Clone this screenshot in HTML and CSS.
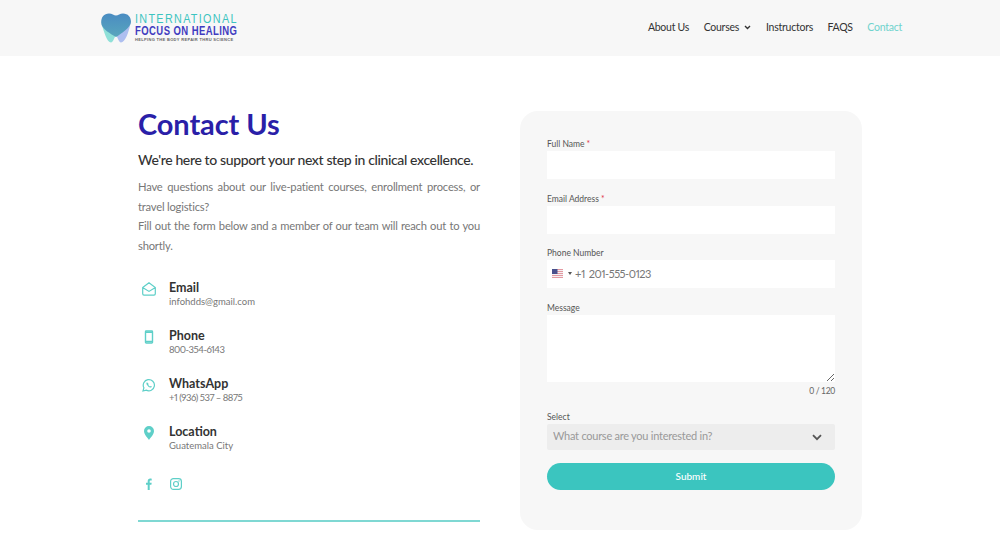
FILE: index.html
```html
<!DOCTYPE html>
<html lang="en">
<head>
    <meta charset="UTF-8">
    <meta name="viewport" content="width=device-width, initial-scale=1.0">
    <title>Contact Us</title>
    <link rel="stylesheet" href="styles.css">
</head>
<body>

<header class="site-header">
    <a class="logo" href="#">
        <svg class="logo-mark" width="30" height="30" viewBox="0 0 30 30">
            <defs>
                <linearGradient id="toothBlue" x1="0" y1="0" x2="0" y2="1">
                    <stop offset="0" stop-color="#4a8cc2"/>
                    <stop offset="1" stop-color="#58a6bd"/>
                </linearGradient>
            </defs>
            <path d="M.6 11C3 19 6 29.500 10 29.500c2 0 3-4.500 5-7.500l-3-8z" fill="#8fe0d8"/>
            <path d="M29.500 10C28 19 24 29.500 20 29.500c-2 0-3-4.500-5-7.500l3-8z" fill="#aebff0"/>
            <path d="M8 .5c3 0 5 2 7 2s4-2 7-2c5 0 8 3.500 8 8.500 0 5-10 12-15 15C10 21 .5 16 .2 10 0 4 3 .5 8 .5z" fill="url(#toothBlue)"/>
        </svg>
        <span class="logo-text">
            <span class="logo-top">INTERNATIONAL</span>
            <span class="logo-main">FOCUS ON HEALING</span>
            <span class="logo-tag">HELPING THE BODY REPAIR THRU SCIENCE</span>
        </span>
    </a>
    <nav class="main-nav">
        <a href="#">About Us</a>
        <a href="#" class="has-sub">Courses
            <svg width="7" height="5" viewBox="0 0 7 5"><path d="M1 1l2.5 2.5L6 1" fill="none" stroke="#333" stroke-width="1.4"/></svg>
        </a>
        <a href="#">Instructors</a>
        <a href="#">FAQS</a>
        <a href="#" class="current">Contact</a>
    </nav>
</header>

<main class="contact">
    <section class="contact-info">
        <h1>Contact Us</h1>
        <h2>We're here to support your next step in clinical excellence.</h2>
        <p class="intro">Have questions about our live-patient courses, enrollment process, or travel logistics?<br>Fill out the form below and a member of our team will reach out to you shortly.</p>

        <div class="info-item">
            <svg class="info-icon" width="14" height="14" viewBox="0 0 14 14"><path d="M.7 5.6L7 .8l6.3 4.8v6.2a1.3 1.3 0 0 1-1.3 1.3H2a1.3 1.3 0 0 1-1.3-1.3zM1 5.8l6 3.6 6-3.6" fill="none" stroke="#5ecfc8" stroke-width="1.2"/></svg>
            <div>
                <h3>Email</h3>
                <p>infohdds@gmail.com</p>
            </div>
        </div>
        <div class="info-item">
            <svg class="info-icon" width="14" height="14" viewBox="0 0 14 14"><path d="M4.200 1h5.600a.7.7 0 0 1 .7.7v10.600a.7.7 0 0 1-.7.7H4.200a.7.7 0 0 1-.7-.7V1.700a.7.7 0 0 1 .7-.7z" fill="none" stroke="#5ecfc8" stroke-width="1.400"/><path d="M3.500 2.200h7M3.500 11.500h7" stroke="#5ecfc8" stroke-width="1.400"/></svg>
            <div>
                <h3>Phone</h3>
                <p class="num">800-354-6143</p>
            </div>
        </div>
        <div class="info-item">
            <svg class="info-icon" width="14" height="14" viewBox="0 0 14 14"><path d="M1 13l.9-3.200A5.600 5.600 0 1 1 4.200 12.100z" fill="none" stroke="#5ecfc8" stroke-width="1.200"/><path d="M5 4.200c-.8.600-.8 1.700 0 2.900s2 2.300 3.200 2.500c.9.100 1.500-.4 1.700-1.100L8.700 7.900l-.7.600c-.7-.3-1.400-1-1.800-1.800l.5-.7z" fill="#5ecfc8"/></svg>
            <div>
                <h3>WhatsApp</h3>
                <p class="num">+1 (936) 537 – 8875</p>
            </div>
        </div>
        <div class="info-item">
            <svg class="info-icon" width="14" height="14" viewBox="0 0 14 14"><path fill-rule="evenodd" d="M7 0a5 5 0 0 1 5 5c0 3.500-3.500 6.500-5 9-1.500-2.500-5-5.500-5-9a5 5 0 0 1 5-5zm0 3.200a1.800 1.800 0 1 0 0 3.600 1.800 1.800 0 0 0 0-3.600z" fill="#5ecfc8"/></svg>
            <div>
                <h3>Location</h3>
                <p>Guatemala City</p>
            </div>
        </div>

        <div class="social">
            <a href="#"><svg width="12" height="12" viewBox="0 0 12 12"><path d="M4.700 12V6.700H3V4.700h1.700V3.300C4.700 1.500 5.700.6 7.200.6c.7 0 1.300.1 1.500.1v1.800H7.700c-.8 0-1 .4-1 1v1.200h2l-.3 2H6.700V12z" fill="#5ecfc8"/></svg></a>
            <a href="#"><svg width="12" height="12" viewBox="0 0 12 12"><rect x=".6" y=".6" width="10.800" height="10.800" rx="2.800" fill="none" stroke="#5ecfc8" stroke-width="1.200"/><circle cx="6" cy="6" r="2.500" fill="none" stroke="#5ecfc8" stroke-width="1.200"/><circle cx="9" cy="3" r=".7" fill="#5ecfc8"/></svg></a>
        </div>
        <hr class="divider">
    </section>

    <form class="contact-form">
        <div class="field">
            <label for="fullName">Full Name<span class="req">*</span></label>
            <input type="text" id="fullName">
        </div>
        <div class="field">
            <label for="email">Email Address<span class="req">*</span></label>
            <input type="email" id="email">
        </div>
        <div class="field">
            <label for="phone">Phone Number</label>
            <div class="phone-box">
                <svg class="flag" width="11" height="9" viewBox="0 0 11 9">
                    <rect width="11" height="9" fill="#e39aa2"/>
                    <path d="M0 1.500h11M0 3.500h11M0 5.500h11M0 7.500h11" stroke="#f4f0f2" stroke-width="1"/>
                    <rect width="5.500" height="5" fill="#48508c"/>
                </svg>
                <span class="caret"></span>
                <span class="dial">+1</span>
                <input type="tel" id="phone" placeholder="201-555-0123">
            </div>
        </div>
        <div class="field field-message">
            <label for="message">Message</label>
            <textarea id="message"></textarea>
            <div class="counter">0 / 120</div>
        </div>
        <div class="field field-select">
            <label for="course">Select</label>
            <div class="select-box">
                <select id="course">
                    <option>What course are you interested in?</option>
                </select>
                <svg width="10" height="7" viewBox="0 0 10 7"><path d="M1 1.200l4 4 4-4" fill="none" stroke="#555" stroke-width="1.800"/></svg>
            </div>
        </div>
        <button type="button" class="submit">Submit</button>
    </form>
</main>

</body>
</html>
```

FILE: styles.css
```css
body {
    margin: 0;
    font-family: Lato, "Open Sans", sans-serif;
    color: #333;
    background: #fff;
}
a {
    text-decoration: none;
    color: inherit;
}
.site-header {
    height: 56px;
    background: #f7f7f7;
    display: flex;
    align-items: center;
    justify-content: space-between;
    padding: 0 98px 0 101px;
}
.logo {
    display: flex;
    align-items: center;
    gap: 4px;
}
.logo-text {
    display: flex;
    flex-direction: column;
    width: 104px;
    font-family: "Liberation Sans", sans-serif;
    white-space: nowrap;
}
.logo-text span {
    transform-origin: left center;
}
.logo-top {
    font-size: 13px;
    line-height: 12px;
    letter-spacing: 1.600px;
    color: #3cc4c0;
    transform: scaleX(.83);
}
.logo-main {
    font-size: 13px;
    line-height: 12px;
    font-weight: bold;
    letter-spacing: .6px;
    color: #3f3cc0;
    transform: scaleX(.73);
}
.logo-tag {
    font-size: 4px;
    line-height: 6px;
    font-weight: bold;
    letter-spacing: .33px;
    color: #666;
}
.main-nav {
    display: flex;
    gap: 14.500px;
    padding-bottom: 2px;
    font-size: 10.500px;
    letter-spacing: -.25px;
    color: #333;
}
.main-nav .has-sub svg {
    margin-left: 3px;
    vertical-align: 1px;
}
.main-nav .current {
    color: #6fd3cd;
}
.contact {
    display: flex;
    gap: 40px;
    padding: 50px 138px 0;
}
.contact-info {
    flex: none;
    width: 342px;
}
.contact-info h1 {
    margin: 0;
    font-size: 29px;
    line-height: 36px;
    font-weight: 700;
    letter-spacing: -.1px;
    color: #2a1fa8;
}
.contact-info h2 {
    margin: 8px 0 0;
    font-size: 14px;
    line-height: 20px;
    font-weight: 500;
    letter-spacing: -.37px;
    color: #333;
    white-space: nowrap;
}
.intro {
    margin: 7px 0 0;
    font-size: 11.200px;
    line-height: 19.500px;
    letter-spacing: -.2px;
    text-align: justify;
    color: #777;
}
.info-item {
    display: flex;
    gap: 13px;
    margin-top: 17.100px;
    height: 31px;
}
.intro + .info-item {
    margin-top: 25px;
}
.info-icon {
    margin: 2px 0 0 4px;
    flex: none;
}
.info-item h3 {
    margin: 0;
    font-size: 12.500px;
    line-height: 15px;
    font-weight: 700;
}
.info-item p {
    margin: 0;
    font-size: 9.500px;
    line-height: 13px;
    color: #777;
}
.info-item .num {
    font-variant-numeric: proportional-nums;
    letter-spacing: -.5px;
}
.social {
    display: flex;
    gap: 15px;
    margin: 18.500px 0 0 5px;
}
.social a {
    display: block;
    height: 12px;
}
.divider {
    border: 0;
    border-top: 2px solid #7fd8d3;
    margin: 34px 0 0;
}
.contact-form {
    flex: none;
    box-sizing: border-box;
    width: 342px;
    height: 419px;
    margin-top: 5px;
    padding: 27px;
    background: #f7f7f7;
    border-radius: 18px;
}
.field {
    margin-bottom: 13.500px;
}
.field-select {
    margin-bottom: 13px;
}
.field label {
    display: block;
    font-size: 8.500px;
    line-height: 13px;
    color: #555;
}
.req {
    margin-left: 2px;
    color: #e0344a;
}
.field input, .field textarea {
    display: block;
    box-sizing: border-box;
    width: 100%;
    height: 28px;
    border: 0;
    padding: 0 6px;
    background: #fff;
    font-family: inherit;
}
.field textarea {
    height: 67px;
}
.counter {
    font-size: 8.500px;
    line-height: 18px;
    letter-spacing: -.3px;
    text-align: right;
    color: #666;
    margin-bottom: -2px;
}
.phone-box {
    display: flex;
    align-items: center;
    box-sizing: border-box;
    height: 28px;
    background: #fff;
    padding: 0 0 2px 5px;
    font-size: 11px;
    font-variant-numeric: proportional-nums;
    letter-spacing: -.5px;
    color: #777;
}
.phone-box .flag {
    margin-right: 5px;
}
.caret {
    border: 2px solid transparent;
    border-top: 3px solid #555;
    border-bottom: 0;
    margin-right: 3px;
}
.phone-box input {
    flex: 1;
    min-width: 0;
    width: auto;
    height: 24px;
    padding: 0 0 0 4px;
    font-size: 11px;
    font-variant-numeric: proportional-nums;
    letter-spacing: -.5px;
}
.phone-box input::placeholder {
    color: #777;
}
.select-box {
    position: relative;
}
.select-box select {
    display: block;
    box-sizing: border-box;
    width: 100%;
    height: 26px;
    border: 0;
    border-radius: 2px;
    padding: 0 6px 3px;
    appearance: none;
    background: #ededed;
    font-family: inherit;
    font-size: 11px;
    letter-spacing: -.25px;
    color: #999;
}
.select-box svg {
    position: absolute;
    right: 13px;
    top: 10px;
}
.submit {
    display: block;
    width: 100%;
    height: 27px;
    border: 0;
    border-radius: 14px;
    padding: 0 0 2px;
    background: #3bc5bf;
    color: #fff;
    font-family: inherit;
    font-size: 10px;
    font-weight: 500;
}
```
